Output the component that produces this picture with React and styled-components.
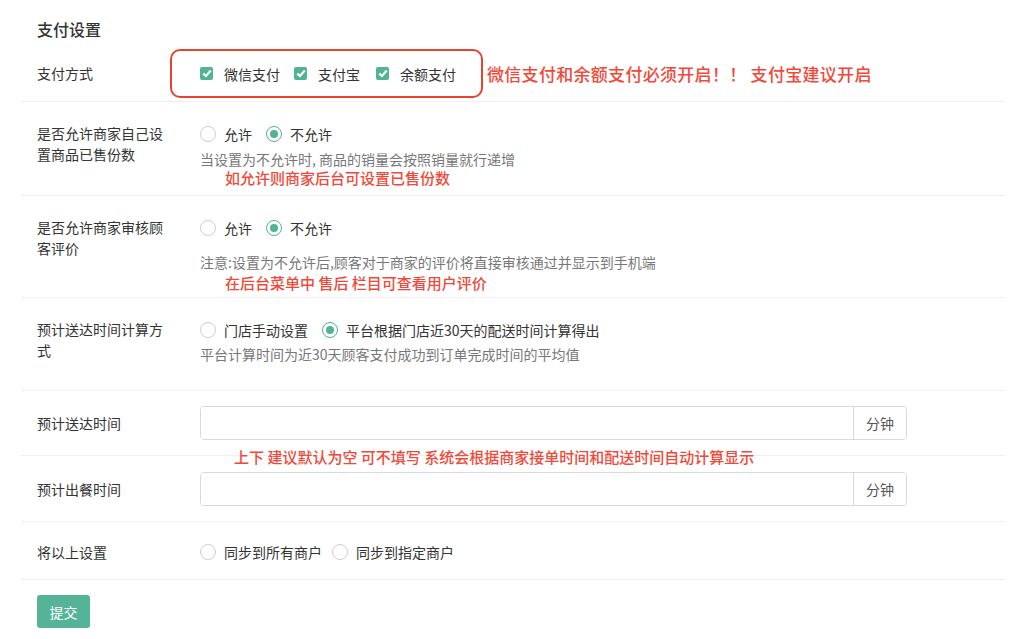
import React from "react";
import styled, { createGlobalStyle } from "styled-components";

const GlobalStyle = createGlobalStyle`
  body {
    margin: 0;
    background: #fff;
    font-family: "Noto Sans CJK SC", "Noto Sans", sans-serif;
    color: #333;
  }
`;

const GREEN = "#52b394";
const RED = "#f0493a";

const Page = styled.div`
  padding: 17px 19px 20px 21px;
`;

const Title = styled.div`
  padding-left: 16px;
  font-size: 16px;
  line-height: 24px;
  font-weight: 500;
  color: #333;
  margin-bottom: 7px;
`;

const Row = styled.div`
  position: relative;
  display: grid;
  grid-template-columns: 179px 1fr;
  align-items: ${(p) => (p.$center ? "center" : "start")};
  padding: ${(p) => p.$pad || "0"};
  border-bottom: 1px solid #efefef;
`;

const Label = styled.div`
  padding-left: 16px;
  font-size: 14px;
  line-height: 21px;
  color: #333;
  width: 130px;
`;

const Field = styled.div`
  display: flex;
  flex-direction: column;
  align-items: flex-start;
`;

const Inline = styled.div`
  display: flex;
  align-items: center;
`;

const Highlight = styled.div`
  display: flex;
  align-items: center;
  margin-left: -30px;
  padding-left: 28px;
  width: 313px;
  height: 49px;
  box-sizing: border-box;
  border: 2px solid #e8432e;
  border-radius: 10px;
`;

const Option = styled.label`
  display: inline-flex;
  align-items: center;
  font-size: 14px;
  line-height: 22px;
  color: #333;
  margin-right: ${(p) => p.$gap || 14}px;
  cursor: pointer;
`;

const CheckBox = styled.span`
  width: 13px;
  height: 13px;
  border-radius: 2px;
  background: ${GREEN};
  display: inline-flex;
  align-items: center;
  justify-content: center;
  margin-right: 11px;
`;

const Radio = styled.span`
  width: 16px;
  height: 16px;
  box-sizing: border-box;
  border-radius: 50%;
  border: 1px solid ${(p) => (p.$on ? GREEN : "#cfcfcf")};
  display: inline-flex;
  align-items: center;
  justify-content: center;
  margin-right: 8px;
  &::after {
    content: "";
    width: 8px;
    height: 8px;
    border-radius: 50%;
    background: ${(p) => (p.$on ? GREEN : "transparent")};
  }
`;

const Help = styled.div`
  font-size: 14px;
  line-height: 20px;
  color: #777;
  margin-top: ${(p) => p.$top || 0}px;
`;

const Note = styled.div`
  font-size: ${(p) => p.$size || 15}px;
  line-height: 20px;
  font-weight: 500;
  color: ${RED};
  white-space: nowrap;
  margin-top: ${(p) => p.$top || 0}px;
  margin-left: ${(p) => p.$left || 0}px;
  letter-spacing: ${(p) => p.$ls || 0}px;
`;

const FloatNote = styled(Note)`
  position: absolute;
  top: 56px;
  left: 213px;
`;

const InputGroup = styled.div`
  display: flex;
  width: 707px;
  height: 34px;
  box-sizing: border-box;
  border: 1px solid #d9d9d9;
  border-radius: 4px;
  overflow: hidden;
`;

const Input = styled.input`
  flex: 1;
  border: none;
  outline: none;
  padding: 0 10px;
  font-size: 14px;
  font-family: inherit;
`;

const Addon = styled.span`
  width: 52px;
  border-left: 1px solid #d9d9d9;
  display: flex;
  align-items: center;
  justify-content: center;
  font-size: 14px;
  color: #555;
  background: #fff;
`;

const Actions = styled.div`
  padding: 15px 0 0 16px;
`;

const Submit = styled.button`
  width: 53px;
  height: 33px;
  border: none;
  border-radius: 3px;
  background: #55b497;
  color: #fff;
  font-size: 14px;
  font-family: inherit;
  cursor: pointer;
`;

const Check = () => (
  <CheckBox>
    <svg width="10" height="9" viewBox="0 0 10 9">
      <path d="M1.3 4.6 L3.9 7 L8.8 1.6" fill="none" stroke="#fff" strokeWidth="2.2" />
    </svg>
  </CheckBox>
);

export default function App() {
  return (
    <Page>
      <GlobalStyle />
      <Title>支付设置</Title>

      <Row $center $pad="1px 0 3px">
        <Label>支付方式</Label>
        <Inline>
          <Highlight>
            <Option $gap={14}><Check />微信支付</Option>
            <Option $gap={16}><Check />支付宝</Option>
            <Option $gap={0}><Check />余额支付</Option>
          </Highlight>
          <Note $size={17} $left={4} $ls={0.3}>微信支付和余额支付必须开启！！ 支付宝建议开启</Note>
        </Inline>
      </Row>

      <Row $pad="21px 0 7px">
        <Label>是否允许商家自己设置商品已售份数</Label>
        <Field>
          <Inline>
            <Option><Radio />允许</Option>
            <Option><Radio $on />不允许</Option>
          </Inline>
          <Help $top={4}>当设置为不允许时, 商品的销量会按照销量就行递增</Help>
          <Note $left={25} $top={-1}>如允许则商家后台可设置已售份数</Note>
        </Field>
      </Row>

      <Row $pad="21px 0 4px">
        <Label>是否允许商家审核顾客评价</Label>
        <Field>
          <Inline>
            <Option><Radio />允许</Option>
            <Option><Radio $on />不允许</Option>
          </Inline>
          <Help $top={13}>注意:设置为不允许后,顾客对于商家的评价将直接审核通过并显示到手机端</Help>
          <Note $left={25} $top={1}>在后台菜单中 售后 栏目可查看用户评价</Note>
        </Field>
      </Row>

      <Row $pad="21px 0 26px">
        <Label>预计送达时间计算方式</Label>
        <Field>
          <Inline>
            <Option><Radio />门店手动设置</Option>
            <Option><Radio $on />平台根据门店近30天的配送时间计算得出</Option>
          </Inline>
          <Help $top={3}>平台计算时间为近30天顾客支付成功到订单完成时间的平均值</Help>
        </Field>
      </Row>

      <Row $center $pad="15px 0 15px">
        <Label>预计送达时间</Label>
        <InputGroup>
          <Input />
          <Addon>分钟</Addon>
        </InputGroup>
        <FloatNote>上下 建议默认为空 可不填写 系统会根据商家接单时间和配送时间自动计算显示</FloatNote>
      </Row>

      <Row $center $pad="16px 0 15px">
        <Label>预计出餐时间</Label>
        <InputGroup>
          <Input />
          <Addon>分钟</Addon>
        </InputGroup>
      </Row>

      <Row $center $pad="19px 0 16px">
        <Label>将以上设置</Label>
        <Inline>
          <Option $gap={10}><Radio />同步到所有商户</Option>
          <Option><Radio />同步到指定商户</Option>
        </Inline>
      </Row>

      <Actions>
        <Submit>提交</Submit>
      </Actions>
    </Page>
  );
}
